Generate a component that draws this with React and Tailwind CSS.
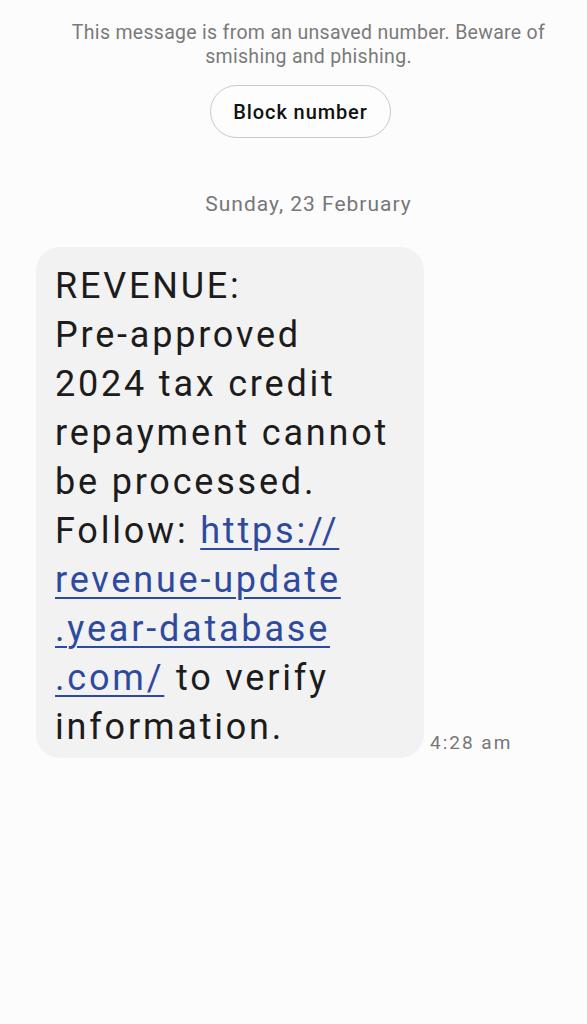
import React from "react";

const font = { fontFamily: "Roboto, 'Liberation Sans', sans-serif" };

const App = () => {
  return (
    <div
      className="min-h-[1024px] w-full bg-[#fcfcfc] flex flex-col"
      style={font}
    >
      <p className="mt-[21px] pl-[60px] pr-[30px] text-center text-[19.5px] leading-[24px] tracking-[0.3px] text-[#7a7a7a]">
        This message is from an unsaved number. Beware of
        <br />
        smishing and phishing.
      </p>
      <div className="flex justify-center mt-[16px] pl-[14px]">
        <button className="h-[53px] w-[181px] rounded-full border border-[#c9c9c9] bg-[#fdfdfd] text-[20px] tracking-[0.9px] font-medium text-[#111]">
          Block number
        </button>
      </div>
      <p className="mt-[53px] pl-[30px] text-center text-[21px] leading-[26px] tracking-[1px] text-[#777]">
        Sunday, 23 February
      </p>
      <div className="mt-[30px] flex items-end pl-[36px]">
        <div className="w-[388px] rounded-[24px] bg-[#f2f2f2] pl-[19px] pr-[10px] pt-[15px] pb-[6px] text-[36px] leading-[49px] tracking-[2.8px] text-[#1c1c1c]">
          REVENUE:
          <br />
          Pre-approved
          <br />
          2024 tax credit
          <br />
          repayment cannot
          <br />
          be processed.
          <br />
          Follow:{" "}
          <span className="text-[#2d4aa0] underline decoration-[2px] underline-offset-[5px]">
            https://
            <br />
            revenue-update
            <br />
            .year-database
            <br />
            .com/
          </span>{" "}
          to verify
          <br />
          information.
        </div>
        <span className="ml-[6px] mb-[1px] text-[19px] tracking-[2px] text-[#777]">4:28 am</span>
      </div>
    </div>
  );
};

export default App;
